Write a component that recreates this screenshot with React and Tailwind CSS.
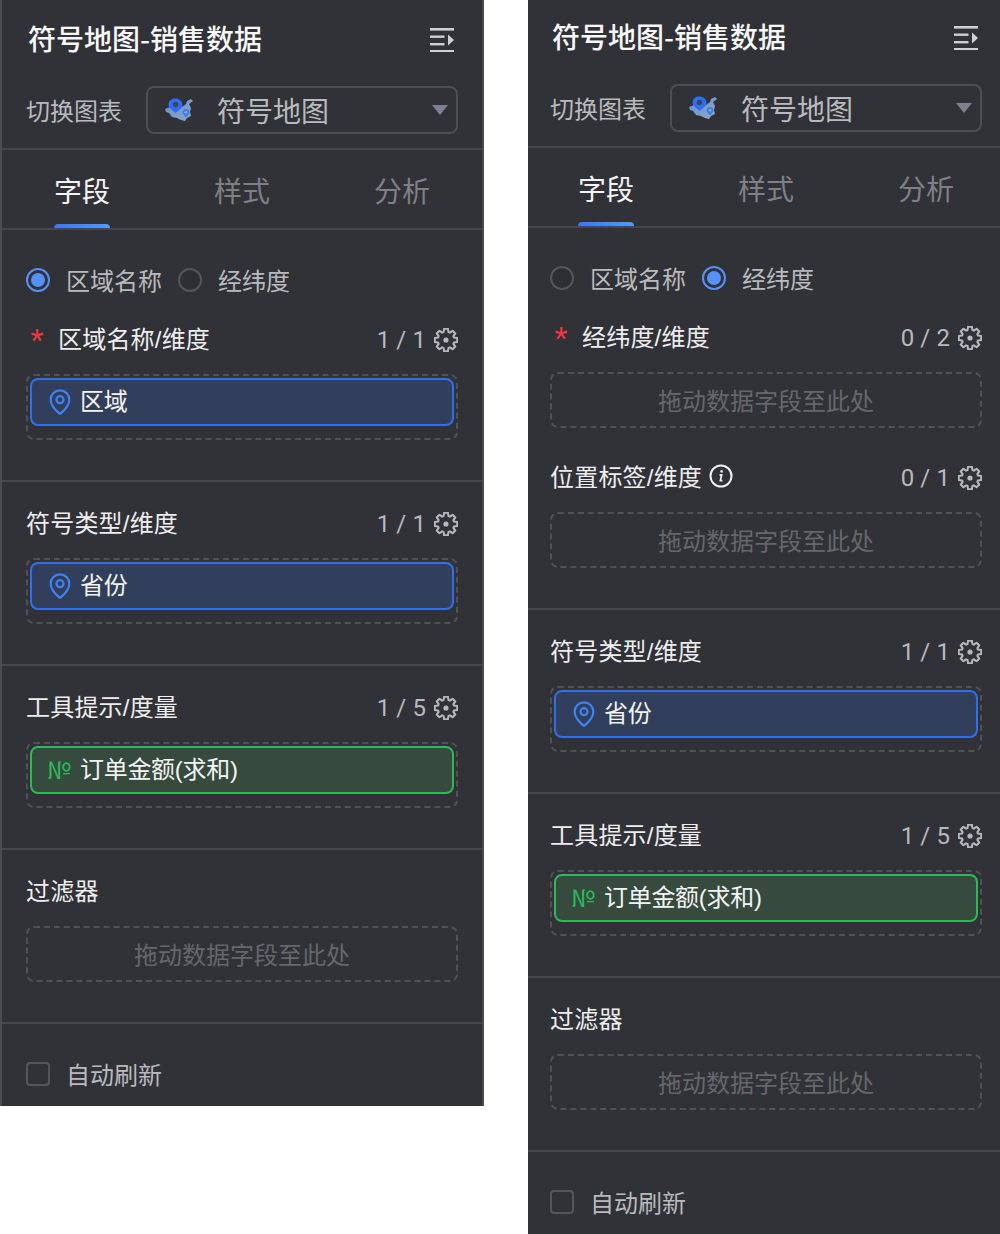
import React from "react";
import { MapPin } from "lucide-react";

const FONT = { fontFamily: '"Noto Sans CJK SC", "Noto Sans", sans-serif' };
const LATIN = { fontFamily: '"Liberation Sans", "Noto Sans CJK SC", sans-serif' };

function gearPath() {
  const pts = [];
  const c = 12;
  const R = 11.4;
  const r = 8.3;
  for (let i = 0; i < 8; i++) {
    const a = (i * Math.PI) / 4 - Math.PI / 2;
    const w = 0.17;
    const W = 0.3;
    pts.push([c + r * Math.cos(a - W), c + r * Math.sin(a - W)]);
    pts.push([c + R * Math.cos(a - w), c + R * Math.sin(a - w)]);
    pts.push([c + R * Math.cos(a + w), c + R * Math.sin(a + w)]);
    pts.push([c + r * Math.cos(a + W), c + r * Math.sin(a + W)]);
  }
  return "M" + pts.map((p) => p[0].toFixed(2) + " " + p[1].toFixed(2)).join(" L") + " Z";
}
const GEAR = gearPath();

function GearIcon() {
  return (
    <svg width="24" height="24" viewBox="0 0 24 24" fill="none" stroke="#b8b9bc" strokeWidth="2" strokeLinejoin="round">
      <path d={GEAR} />
      <circle cx="12" cy="12" r="2.6" fill="#b8b9bc" stroke="none" />
    </svg>
  );
}

function MenuIcon() {
  return (
    <svg width="24" height="24" viewBox="0 0 24 24" fill="#cfd0d2">
      <rect x="0" y="0" width="24" height="2.6" />
      <rect x="0" y="7.5" width="14.5" height="2.4" />
      <rect x="0" y="15" width="14.5" height="2.4" />
      <rect x="0" y="22" width="24" height="2.6" />
      <path d="M18 6.5 L24 12 L18 17.5 Z" />
    </svg>
  );
}

function MapLogo() {
  return (
    <svg width="30" height="24" viewBox="0 0 30 24">
      <defs>
        <linearGradient id="mapg" x1="0" y1="0" x2="1" y2="1">
          <stop offset="0" stopColor="#5f8fd0" />
          <stop offset="1" stopColor="#93a9c6" />
        </linearGradient>
      </defs>
      <path d="M1 11 L6 9 L12 11 L18 9 L22 6 L23 3 L27 1 L29 3 L25 6 L27 10 L26 14 L27 18 L23 20 L21 23 L17 22 L13 20 L8 19 L5 15 L2 14 Z" fill="url(#mapg)" />
      <path d="M11 0.5 C15 0.5 18.5 3 18.5 7 C18.5 10 15 12 11.5 15 C9 12 4.5 10 4.5 6.5 C4.5 3 7.5 0.5 11 0.5 Z" fill="#2f6ef6" />
      <circle cx="11.5" cy="6.5" r="2.8" fill="#3c4658" />
      <path d="M22 11 C24 11 25.5 12.6 25.5 14.3 C25.5 16.3 23.3 17.5 22 19.5 C20.7 17.5 18.5 16.3 18.5 14.3 C18.5 12.6 20 11 22 11 Z" fill="#3a7cf2" />
      <circle cx="22" cy="14.3" r="1.3" fill="#8fb0da" />
    </svg>
  );
}

function Caret() {
  return (
    <svg width="16" height="10" viewBox="0 0 16 10" fill="#7c8091">
      <path d="M0 0 H16 L8 10 Z" />
    </svg>
  );
}

function InfoIcon() {
  return (
    <svg width="24" height="24" viewBox="0 0 24 24" fill="none" stroke="#f0f0f2" strokeWidth="2">
      <circle cx="12" cy="12" r="10.5" />
      <circle cx="12.6" cy="7.4" r="1.3" fill="#f0f0f2" stroke="none" />
      <path d="M10.6 11 H12.6 L11.4 16.6 H13.4" strokeWidth="1.8" />
    </svg>
  );
}

function Radio({ on }) {
  return on ? (
    <span className="flex h-6 w-6 shrink-0 items-center justify-center rounded-full border-2 border-[#5592f7]">
      <span className="h-3.5 w-3.5 rounded-full bg-[#5592f7]" />
    </span>
  ) : (
    <span className="block h-6 w-6 shrink-0 rounded-full border-2 border-[#55565b] bg-[#2e2f33]" />
  );
}

function Pill({ kind, text }) {
  const blue = kind === "blue";
  return (
    <div
      className={
        blue
          ? "flex h-12 items-center rounded-lg border-2 border-[#2f70ea] bg-[#323f5c] pl-[14px]"
          : "flex h-12 items-center rounded-lg border-2 border-[#2cb95a] bg-[#364a3e] pl-[14px]"
      }
    >
      {blue ? (
        <span className="flex w-7 justify-center">
          <MapPin size={28} color="#3f82f4" strokeWidth={1.9} />
        </span>
      ) : (
        <span className="-ml-px mb-[2px] mr-px w-7 text-center text-[24px] leading-none text-[#2cb95a]">№</span>
      )}
      <span className="ml-[6px] text-[24px] leading-[30px] tracking-[-0.3px] text-[#f4f4f5]" style={LATIN}>
        {text}
      </span>
    </div>
  );
}

function Drop({ children }) {
  return children ? (
    <div className="mt-[18px] rounded-lg border-2 border-dashed border-[#505156] px-[2px] pb-[12px] pt-[2px]">{children}</div>
  ) : (
    <div className="mt-[18px] flex h-14 items-center justify-center rounded-lg border-2 border-dashed border-[#505156] text-[24px] text-[#66676c]">
      拖动数据字段至此处
    </div>
  );
}

function Head({ label, req, info, count }) {
  return (
    <div className="flex h-8 items-center">
      {req && (
        <span className="ml-[4px] mr-[14px] w-[14px] text-center text-[30px] leading-[30px] text-[#f0383c]" style={{ fontFamily: '"Roboto", sans-serif' }}>
          *
        </span>
      )}
      <span className="text-[24px] leading-[30px] tracking-[0.2px] text-[#eeeef0]" style={LATIN}>
        {label}
      </span>
      {info && (
        <span className="-mt-1 ml-[7px]">
          <InfoIcon />
        </span>
      )}
      {count && (
        <span className="ml-auto flex items-center">
          <span className="text-[24px] tracking-[0.1px] text-[#b8b9bc]" style={{ fontFamily: '"Roboto", sans-serif' }}>
            {count}
          </span>
          <span className="ml-[8px]">
            <GearIcon />
          </span>
        </span>
      )}
    </div>
  );
}

function Section({ children }) {
  return <div className="border-b-2 border-[#46474c] px-6 pb-10 pt-[26px]">{children}</div>;
}

function Panel({ variant }) {
  const left = variant === "left";
  return (
    <div className="w-[484px] border-x-2 border-[#4a4b50] bg-[#313237]" style={FONT}>
      <div className="border-b-2 border-[#46474c] px-6 pb-[14px] pt-[18px]">
        <div className="flex h-10 items-center justify-between">
          <span className="ml-[2px] text-[28px] font-medium leading-10 text-[#f8f8f9]">符号地图-销售数据</span>
          <span className="mr-[4px] mt-[4px] block">
            <MenuIcon />
          </span>
        </div>
        <div className="mt-[28px] flex items-center">
          <span className="w-[120px] text-[24px] text-[#b9babd]">切换图表</span>
          <div className="flex h-12 flex-1 items-center rounded-lg border-2 border-[#4d4e53] pl-4 pr-[8px]">
            <MapLogo />
            <span className="ml-[23px] text-[28px] text-[#b9babd]">符号地图</span>
            <span className="ml-auto">
              <Caret />
            </span>
          </div>
        </div>
      </div>

      <div className="grid h-[80px] grid-cols-3 border-b-2 border-[#46474c] text-[28px]">
        <div className="relative flex items-center justify-center pt-[2px] text-[#f4f4f5]">
          字段
          <span className="absolute bottom-0 left-[52px] h-1 w-14 rounded-t bg-gradient-to-r from-[#3f73f5] to-[#4f9cf5]" />
        </div>
        <div className="flex items-center justify-center pt-[2px] text-[#7f8086]">样式</div>
        <div className="flex items-center justify-center pt-[2px] text-[#7f8086]">分析</div>
      </div>

      <div className="border-b-2 border-[#46474c] px-6 pb-10 pt-[34px]">
        <div className="flex h-8 items-center text-[24px] text-[#b9babd]">
          <Radio on={left} />
          <span className="ml-4">区域名称</span>
          <span className="ml-4 flex">
            <Radio on={!left} />
          </span>
          <span className="ml-4">经纬度</span>
        </div>
        <div className="mt-[28px]">
          {left ? (
            <>
              <Head label="区域名称/维度" req count="1 / 1" />
              <Drop>
                <Pill kind="blue" text="区域" />
              </Drop>
            </>
          ) : (
            <>
              <Head label="经纬度/维度" req count="0 / 2" />
              <Drop />
              <div className="mt-[34px]">
                <Head label="位置标签/维度" info count="0 / 1" />
              </div>
              <Drop />
            </>
          )}
        </div>
      </div>

      <Section>
        <Head label="符号类型/维度" count="1 / 1" />
        <Drop>
          <Pill kind="blue" text="省份" />
        </Drop>
      </Section>

      <Section>
        <Head label="工具提示/度量" count="1 / 5" />
        <Drop>
          <Pill kind="green" text="订单金额(求和)" />
        </Drop>
      </Section>

      <Section>
        <Head label="过滤器" />
        <Drop />
      </Section>

      <div className="flex h-[82px] items-start px-6 pt-[38px]">
        <span className="h-6 w-6 rounded border-2 border-[#55565b]" />
        <span className="ml-4 text-[24px] leading-6 text-[#b9babd]">自动刷新</span>
      </div>
    </div>
  );
}

export default function App() {
  return (
    <div className="flex h-[1234px] w-[1000px] items-start overflow-hidden bg-white">
      <Panel variant="left" />
      <div className="ml-[44px] h-[1234px] w-[472px] overflow-hidden">
        <div className="-ml-1 -mt-[2px]">
          <Panel variant="right" />
        </div>
      </div>
    </div>
  );
}
